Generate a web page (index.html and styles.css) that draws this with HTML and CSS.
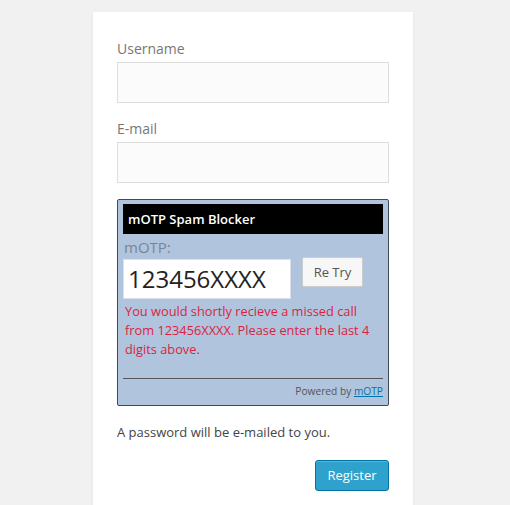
FILE: index.html
```html
<!DOCTYPE html>
<html>
<head>
<meta charset="utf-8">
<link rel="stylesheet" href="styles.css">
</head>
<body>
<div class="card">
  <label class="lbl">Username</label>
  <div class="field"></div>
  <label class="lbl lbl2">E-mail</label>
  <div class="field"></div>
  <div class="motp">
    <div class="motp-head">mOTP Spam Blocker</div>
    <div class="motp-lbl">mOTP:</div>
    <div class="motp-row">
      <div class="motp-input">123456XXXX</div>
      <div class="retry">Re Try</div>
    </div>
    <p class="motp-msg">You would shortly recieve a missed call from 123456XXXX. Please enter the last 4 digits above.</p>
    <div class="motp-hr"></div>
    <div class="powered">Powered by <span class="link">mOTP</span></div>
  </div>
  <p class="note">A password will be e-mailed to you.</p>
  <div class="actions"><div class="register">Register</div></div>
</div>
</body>
</html>
```
FILE: styles.css
```css
html, body { margin: 0; padding: 0; }
body {
  background: #f1f1f1;
  font-family: "Open Sans", "Liberation Sans", sans-serif;
  height: 505px;
  overflow: hidden;
}
.card {
  width: 320px;
  margin: 12px 0 0 93px;
  background: #fff;
  padding: 27px 24px 40px 24px;
  box-sizing: border-box;
  box-shadow: 0 1px 3px rgba(0,0,0,0.06);
}
.lbl {
  display: block;
  font-size: 14px;
  color: #777;
  line-height: 20px;
  margin-bottom: 3px;
}
.lbl2 { margin-top: 16px; }
.field {
  width: 272px;
  height: 41px;
  box-sizing: border-box;
  border: 1px solid #ddd;
  background: #fbfbfb;
}
.motp {
  margin-top: 16px;
  width: 272px;
  box-sizing: border-box;
  background: #b0c4de;
  border: 1px solid #3d4a59;
  border-radius: 2px;
  padding: 4px 5px 7px 5px;
}
.motp-head {
  background: #000;
  color: #fff;
  font-weight: 600;
  font-size: 13px;
  height: 30px;
  line-height: 30px;
  padding-left: 5px;
}
.motp-lbl {
  color: #7a8594;
  font-size: 15px;
  line-height: 18px;
  margin-top: 4px;
  padding-left: 1px;
}
.motp-row {
  display: flex;
  align-items: flex-start;
  margin-top: 1px;
}
.motp-input {
  width: 168px;
  height: 40px;
  box-sizing: border-box;
  background: #fff;
  border: 1px solid #dde;
  font-size: 24px;
  line-height: 38px;
  color: #222;
  padding-left: 4px;
  margin-top: 2px;
}
.retry {
  margin-left: 11px;
  width: 61px;
  height: 30px;
  box-sizing: border-box;
  background: #f7f7f7;
  border: 1px solid #ccc;
  border-radius: 2px;
  font-size: 13px;
  color: #555;
  text-align: center;
  line-height: 28px;
}
.motp-msg {
  margin: 3px 0 0 2px;
  color: #dd1f3e;
  font-size: 12.8px;
  line-height: 19px;
}
.motp-hr {
  margin-top: 19px;
  height: 1px;
  background: #555;
}
.powered {
  text-align: right;
  font-size: 10.2px;
  color: #555;
  margin-top: 5px;
  line-height: 14px;
}
.link { color: #0073aa; text-decoration: underline; }
.note {
  margin: 17px 0 0 0;
  font-size: 13px;
  color: #444;
  line-height: 18px;
}
.actions {
  display: flex;
  justify-content: flex-end;
  margin-top: 19px;
}
.register {
  width: 74px;
  height: 31px;
  box-sizing: border-box;
  background: #2ea2cc;
  border: 1px solid #0074a2;
  border-radius: 3px;
  color: #fff;
  font-size: 13px;
  text-align: center;
  line-height: 29px;
  box-shadow: inset 0 1px 0 rgba(120,200,230,0.5);
}
```
